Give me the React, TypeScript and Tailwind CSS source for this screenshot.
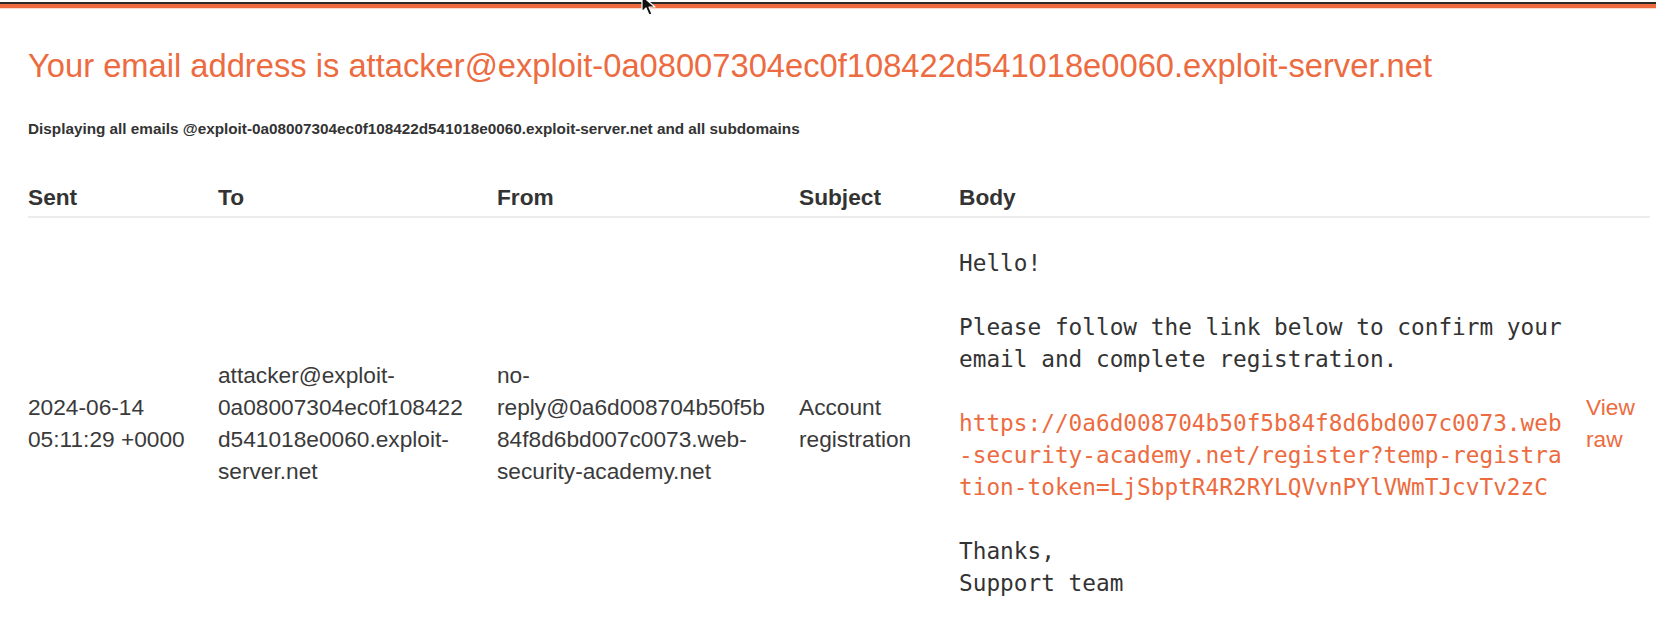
import React from 'react';

const sans = { fontFamily: '"Liberation Sans", Arial, sans-serif' };

const toLines = ['attacker@exploit-', '0a08007304ec0f108422', 'd541018e0060.exploit-', 'server.net'];
const fromLines = ['no-', 'reply@0a6d008704b50f5b', '84f8d6bd007c0073.web-', 'security-academy.net'];
const linkLines = [
  'https://0a6d008704b50f5b84f8d6bd007c0073.web',
  '-security-academy.net/register?temp-registra',
  'tion-token=LjSbptR4R2RYLQVvnPYlVWmTJcvTv2zC',
];

const Lines: React.FC<{ lines: string[] }> = ({ lines }) => (
  <div>
    {lines.map((l) => (
      <div key={l}>{l}</div>
    ))}
  </div>
);

const Cursor: React.FC = () => (
  <svg className="absolute left-[640px] top-[-5px]" width="22" height="24" viewBox="0 0 22 24">
    <path d="M2 1 L2 17 L6 13 L9 20 L12 19 L9 12 L15 12 Z" fill="#111" stroke="#fff" strokeWidth="1.2" strokeLinejoin="round" />
  </svg>
);

export default function App() {
  return (
    <div className="relative w-[1656px] h-[626px] overflow-hidden bg-white text-[#333]" style={sans}>
      <div className="mt-[2px] h-[2px] bg-[#2e2a28]" />
      <div className="h-[4px] bg-[#ec6a3e]" />
      <div className="h-[1px] bg-[#fbd9cc]" />
      <Cursor />

      <div className="px-[28px]">
        <h1 className="mt-[39px] text-[32.7px] leading-[36px] text-[#ec6b40] font-normal whitespace-nowrap">
          Your email address is attacker@exploit-0a08007304ec0f108422d541018e0060.exploit-server.net
        </h1>
        <p className="mt-[37px] text-[15.3px] leading-[16px] font-bold text-[#333] whitespace-nowrap">
          Displaying all emails @exploit-0a08007304ec0f108422d541018e0060.exploit-server.net and all subdomains
        </p>

        <div className="mt-[41px] w-[1622px]">
          <div className="flex h-[40px] items-center border-b-2 border-[#ececec] text-[22.7px] font-bold">
            <div className="w-[190px]">Sent</div>
            <div className="w-[279px]">To</div>
            <div className="w-[302px]">From</div>
            <div className="w-[160px]">Subject</div>
            <div className="w-[627px]">Body</div>
          </div>
          <div className="flex items-center pt-[29px] text-[22.7px] leading-[32px] text-[#3a3a3a]">
            <div className="w-[190px]">
              <div>2024-06-14</div>
              <div>05:11:29 +0000</div>
            </div>
            <div className="w-[279px]">
              <Lines lines={toLines} />
            </div>
            <div className="w-[302px]">
              <Lines lines={fromLines} />
            </div>
            <div className="w-[160px]">
              <div>Account</div>
              <div>registration</div>
            </div>
            <div
              className="w-[627px] whitespace-pre text-[22.75px] text-[#333]"
              style={{ fontFamily: '"DejaVu Sans Mono", monospace' }}
            >
              <div>Hello!</div>
              <div>&nbsp;</div>
              <div>Please follow the link below to confirm your</div>
              <div>email and complete registration.</div>
              <div>&nbsp;</div>
              {linkLines.map((l) => (
                <div key={l} className="text-[#ec6b40]">
                  {l}
                </div>
              ))}
              <div>&nbsp;</div>
              <div>Thanks,</div>
              <div>Support team</div>
            </div>
            <div className="flex-1 text-[#ec6b40]">
              <div>View</div>
              <div>raw</div>
            </div>
          </div>
        </div>
      </div>
    </div>
  );
}
